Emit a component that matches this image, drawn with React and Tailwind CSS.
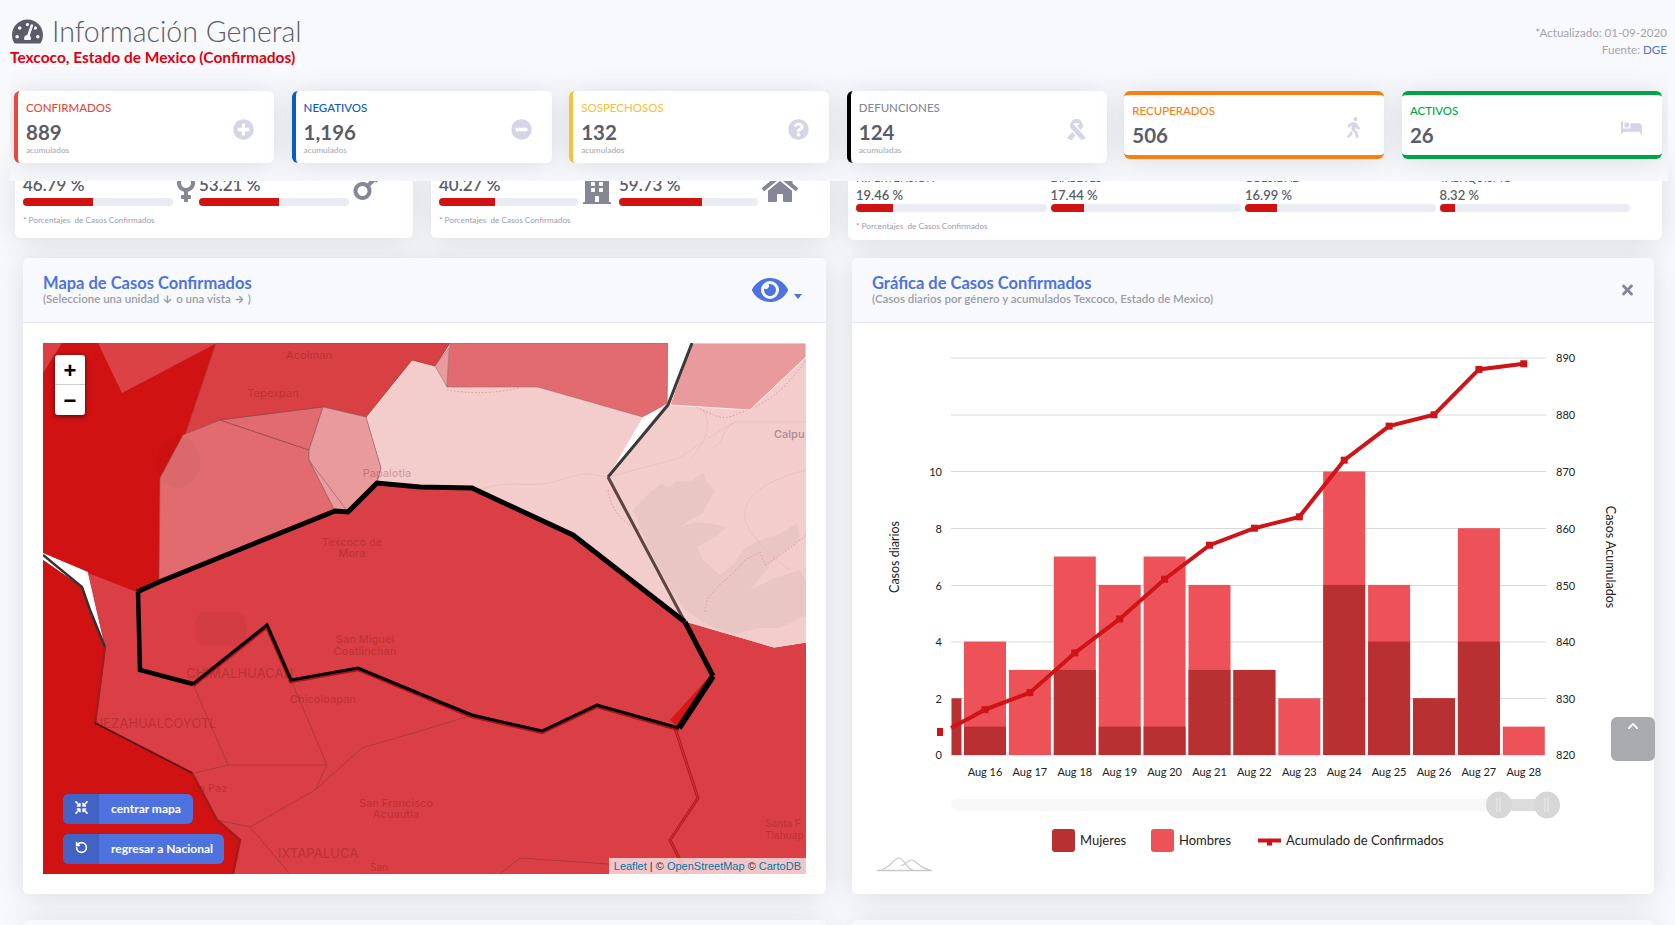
import { RotateCcw } from 'lucide-react';
import {
  FaTachometerAlt, FaPlusCircle, FaMinusCircle, FaQuestionCircle, FaRibbon, FaWalking, FaBed,
  FaVenus, FaMars, FaBuilding, FaHome, FaEye, FaTimes, FaCompressArrowsAlt, FaArrowDown, FaArrowRight, FaChevronUp,
} from 'react-icons/fa';

const kpis = [
  { label: 'CONFIRMADOS', value: '889', note: 'acumulados', Icon: FaPlusCircle, box: 'border-l-4 border-l-[#e74a3b] h-[72px]', text: 'text-[#e74a3b]' },
  { label: 'NEGATIVOS', value: '1,196', note: 'acumulados', Icon: FaMinusCircle, box: 'border-l-4 border-l-[#0a5cc2] h-[72px]', text: 'text-[#0a5cc2]' },
  { label: 'SOSPECHOSOS', value: '132', note: 'acumulados', Icon: FaQuestionCircle, box: 'border-l-4 border-l-[#f6c23e] h-[72px]', text: 'text-[#f6c23e]' },
  { label: 'DEFUNCIONES', value: '124', note: 'acumuladas', Icon: FaRibbon, box: 'border-l-4 border-l-black h-[72px]', text: 'text-[#858796]' },
  { label: 'RECUPERADOS', value: '506', Icon: FaWalking, box: 'border-y-4 border-y-[#f97f12] h-[68px]', text: 'text-[#f97f12]' },
  { label: 'ACTIVOS', value: '26', Icon: FaBed, box: 'border-y-4 border-y-[#00a446] h-[68px]', text: 'text-[#00a446]' },
];

const conditions = [
  { label: 'HIPERTENSIÓN', pct: 19.46 },
  { label: 'DIABETES', pct: 17.44 },
  { label: 'OBESIDAD', pct: 16.99 },
  { label: 'TABAQUISMO', pct: 8.32 },
];

const days = [
  { d: 'Aug 16', w: 1, t: 4, c: 828 }, { d: 'Aug 17', w: 0, t: 3, c: 831 }, { d: 'Aug 18', w: 3, t: 7, c: 838 },
  { d: 'Aug 19', w: 1, t: 6, c: 844 }, { d: 'Aug 20', w: 1, t: 7, c: 851 }, { d: 'Aug 21', w: 3, t: 6, c: 857 },
  { d: 'Aug 22', w: 3, t: 3, c: 860 }, { d: 'Aug 23', w: 0, t: 2, c: 862 }, { d: 'Aug 24', w: 6, t: 10, c: 872 },
  { d: 'Aug 25', w: 4, t: 6, c: 878 }, { d: 'Aug 26', w: 2, t: 2, c: 880 }, { d: 'Aug 27', w: 4, t: 8, c: 888 },
  { d: 'Aug 28', w: 0, t: 1, c: 889 },
];

const barY = (v) => 755 - v * 28.35;
const lineY = (c) => 755 - (c - 820) * 5.67;
const dayX = (i) => 985 + i * 44.9;

const mapLabels = [
  ['Acolman', 309, 359, 11], ['Tepexpan', 273, 397, 11], ['Papalotla', 387, 477, 11], ['Texcoco de', 352, 546, 11], ['Mora', 352, 557, 11],
  ['San Miguel', 365, 643, 11], ['Coatlinchan', 365, 655, 11], ['CHIMALHUACAN', 240, 678, 13], ['Chicoloapan', 323, 703, 11],
  ['NEZAHUALCOYOTL', 155, 728, 13], ['La Paz', 210, 792, 11], ['San Francisco', 396, 807, 11], ['Acuautla', 396, 818, 11],
  ['IXTAPALUCA', 318, 858, 13], ['San', 379, 871, 10],
];

const Bar = ({ pct }) => (
  <div className="h-2 w-full overflow-hidden rounded-full bg-[#eaecf4]">
    <div className="h-full bg-[#d01212]" style={{ width: `${pct}%` }} />
  </div>
);

const Note = ({ className }) => (
  <p className={`text-[8.2px] leading-[10px] text-[#9b9dae] ${className}`}>* Porcentajes&nbsp; de Casos Confirmados</p>
);

const PctCol = ({ pct, className }) => (
  <div className={className}>
    <p className="text-[17px] font-semibold leading-5 text-[#5a5c69]">{pct} %</p>
    <div className="mt-[3px]"><Bar pct={pct} /></div>
  </div>
);

const MapShapes = () => (
  <svg className="block h-full w-full" viewBox="43 343 763 531">
    <rect x="43" y="343" width="763" height="531" fill="#d01212" />
    <polygon points="366,417 412,360 435,366 450,343 806,343 806,643 774,648 685,622 573,535 472,488 420,487 377,483 381,468" fill="#f3cccc" />
    <path d="M633 510L650 492 662 483 668 488 677 481 690 482 703 473 707 482 715 490 708 503 703 513 690 520 680 527 695 522 712 524 727 527 715 537 697 547 703 560 712 568 720 575 735 562 745 548 760 540 778 535 797 523 800 540 783 552 770 565 760 578 750 590 775 578 800 570 806 582 806 600 806 615 780 628 760 628 735 634 710 626 685 610 665 580 650 550z" fill="#e9c6c3" />
    <g fill="none" stroke="#e6bcbc" strokeWidth="0.7">
      <path d="M480 490C510 478 530 490 560 480S590 475 608 477" />
      <path d="M608 477L680 458 705 440 735 422 806 422" />
      <path d="M700 407C715 420 705 445 690 458" />
      <path d="M735 422C720 430 725 445 712 448" />
      <path d="M806 470C775 478 750 490 745 510S775 560 790 570" />
    </g>
    <g fill="none" stroke="#e58c8e" strokeWidth="0.8" strokeDasharray="1.5 2">
      <path d="M447 390C480 395 500 392 520 388" />
      <path d="M608 490C610 510 625 525 640 530" />
      <path d="M705 612C705 590 725 585 745 560L760 552 765 565C780 555 795 545 806 535" />
      <path d="M690 405C710 412 720 422 735 415S775 405 806 360" />
    </g>
    <polygon points="43,373 62,343 43,343" fill="#db3f43" />
    <polygon points="98,343 217,343 122,393" fill="#db4246" />
    <polygon points="216,343 185,435 220,420 323,407 366,417 412,360 435,366 450,343" fill="#d94044" stroke="#8f4a4c" strokeWidth="0.6" />
    <polygon points="160,478 183,435 220,420 309,450 309,460 335,511 159,582" fill="#e16b6e" stroke="#8f5a5c" strokeWidth="0.6" />
    <ellipse cx="178" cy="462" rx="22" ry="26" fill="#000" fillOpacity="0.025" />
    <polygon points="220,420 323,407 309,450" fill="#e16b6e" stroke="#7f4a4c" strokeWidth="0.6" />
    <polygon points="323,407 366,417 381,468 377,483 348,512 335,511 309,460 309,450" fill="#e99a9c" stroke="#8f6a6c" strokeWidth="0.6" />
    <polyline points="309,460 348,512" fill="none" stroke="#8f5a5c" strokeWidth="0.6" />
    <polygon points="435,366 449,348 447,387" fill="#e99a9c" stroke="#8f6a6c" strokeWidth="0.5" />
    <polygon points="450,343 447,387 538,387 643,417 667,403 668,343" fill="#e16b6e" stroke="#9a6a6c" strokeWidth="0.6" />
    <polygon points="692,343 806,343 806,357 750,410 670,405" fill="#e99a9c" stroke="#fff" strokeWidth="0.8" />
    <polygon points="668,343 692,343 668,403" fill="#ffffff" />
    <polygon points="643,417 663,407 608,477" fill="#ffffff" />
    <polygon points="43,553 88,572 105,647 82,587 43,560" fill="#ffffff" />
    <polygon points="88,573 137,592 159,582 335,511 348,512 377,483 420,487 472,488 573,535 685,622 774,648 806,643 806,874 233,874 240,840 217,820 192,773 95,723 105,647" fill="#d93f44" />
    <rect x="195" y="612" width="52" height="34" rx="10" fill="#000" fillOpacity="0.025" />
    <polygon points="43,560 82,587 90,610 105,647 95,723 43,700" fill="#d01212" />
    <polygon points="708,678 670,720 679,728" fill="#d81616" />
    <polyline points="105,647 95,723 192,773 217,820 240,840 233,874" fill="none" stroke="#a81a1c" strokeWidth="2.5" />
    <polyline points="95,723 192,773" fill="none" stroke="#2a0a0a" strokeWidth="1" />
    <g fill="none" stroke="#8a3236" strokeWidth="0.6" opacity="0.85">
      <polyline points="193,684 228,765 327,765 291,680" />
      <polyline points="228,765 195,773" />
      <polyline points="327,765 315,790 250,827 217,820" />
      <polyline points="315,790 362,748 440,725 472,715" />
      <polyline points="250,827 290,874" />
      <polyline points="500,874 520,858 608,864" />
    </g>
    <polyline points="675,728 698,798 670,840 687,874" fill="none" stroke="#b01c1e" strokeWidth="3" />
    <polyline points="675,728 698,798 670,840 687,874" fill="none" stroke="#d33236" strokeWidth="1" />
    <polyline points="43,555 82,587 90,610 105,647" fill="none" stroke="#333333" strokeWidth="2.5" />
    <polyline points="692,343 668,405 608,477" fill="none" stroke="#3a3a3a" strokeWidth="3" />
    <polyline points="608,477 685,622" fill="none" stroke="#5e4343" strokeWidth="3" />
    {mapLabels.map(([name, x, y, size]) => (
      <text key={name} x={x} y={y} textAnchor="middle" fontSize={size} fontWeight="500" fontFamily="Inter, sans-serif" fill="#7a0f14" fillOpacity="0.28">{name}</text>
    ))}
    <text x="765" y="827" fontSize="10" fontWeight="500" fontFamily="Inter, sans-serif" fill="#7a0f14" fillOpacity="0.28">Santa F</text>
    <text x="765" y="839" fontSize="10" fontWeight="500" fontFamily="Inter, sans-serif" fill="#7a0f14" fillOpacity="0.28">Tlahuap</text>
    <text x="774" y="438" fontSize="11" fontWeight="500" fontFamily="Inter, sans-serif" fill="#a58b9a">Calpu</text>
    <polyline points="679,729 597,706 542,732 472,716 440,703 358,669 291,681 267,626 193,685" fill="none" stroke="#ab1418" strokeWidth="4.5" />
    <polyline points="137,592 159,582 335,511 348,512 377,483 420,487 472,488 573,535 685,622" fill="none" stroke="#000" strokeWidth="5" />
    <polyline points="685,622 713,676" fill="none" stroke="#000" strokeWidth="5" />
    <polyline points="713,676 679,728" fill="none" stroke="#000" strokeWidth="6" />
    <polyline points="679,728 597,705 542,731 472,715 440,702 358,668 291,680 267,625 193,684" fill="none" stroke="#000" strokeWidth="3" />
    <polyline points="193,684 140,670 138,592" fill="none" stroke="#000" strokeWidth="4.5" />
  </svg>
);

const Chart = () => {
  const grid = [
    [755, '0', '820'], [698.5, '2', '830'], [642, '4', '840'], [585.5, '6', '850'], [528.5, '8', '860'], [471.5, '10', '870'], [415, '', '880'], [358, '', '890'],
  ];
  const points = [`951,728`, ...days.map((p, i) => `${dayX(i)},${lineY(p.c)}`)].join(' ');
  return (
    <svg className="block h-[498px] w-full" viewBox="852 323 802 498" fontFamily="Lato, sans-serif">
      {grid.map(([y, left, right]) => (
        <g key={y}>
          <line x1="951" x2="1546" y1={y} y2={y} stroke="#d9d9d9" strokeWidth="1" />
          {left && <text x="942" y={y + 4} textAnchor="end" fontSize="11" fill="#222">{left}</text>}
          <text x="1556" y={y + 4} fontSize="11" fill="#222">{right}</text>
        </g>
      ))}
      <text transform="translate(899 557) rotate(-90)" textAnchor="middle" fontSize="12.5" fill="#222">Casos diarios</text>
      <text transform="translate(1606 557) rotate(90)" textAnchor="middle" fontSize="12.5" fill="#222">Casos Acumulados</text>
      <rect x="951.5" y={barY(2)} width="10" height={755 - barY(2)} fill="#b83032" />
      {days.map((p, i) => (
        <g key={p.d}>
          <rect x={dayX(i) - 21} y={barY(p.t)} width="42" height={755 - barY(p.t)} fill="#ec5257" />
          {p.w > 0 && <rect x={dayX(i) - 21} y={barY(p.w)} width="42" height={755 - barY(p.w)} fill="#b83032" />}
          <text x={dayX(i)} y="776" textAnchor="middle" fontSize="11" fill="#222">{p.d}</text>
        </g>
      ))}
      <polyline points={points} fill="none" stroke="#d01317" strokeWidth="4" />
      <rect x="937" y="728" width="6" height="8" fill="#d01317" />
      {days.map((p, i) => (
        <rect key={p.d} x={dayX(i) - 3.5} y={lineY(p.c) - 3.5} width="7" height="7" fill="#d01317" />
      ))}
      <rect x="951" y="799" width="595" height="12" rx="6" fill="#f8f8f8" />
      <rect x="1510" y="799" width="26" height="12" fill="#dcdcdc" />
      {[1499, 1547].map((x) => (
        <g key={x}>
          <ellipse cx={x} cy="805" rx="13" ry="13.5" fill="#d7d7d7" />
          <path d={`M${x - 2} 798v14M${x + 1} 798v14`} stroke="#ececec" strokeWidth="1" />
        </g>
      ))}
    </svg>
  );
};

const App = () => (
  <div className="relative h-[925px] overflow-hidden bg-[#f8f9fc] font-['Lato',sans-serif]">
    <header className="relative z-10 ml-[10px] mr-[7px] h-[181px] overflow-hidden bg-[#f8f9fc]">
      <div className="flex h-[91px] items-start justify-between pr-px pt-[15px]">
        <div>
          <div className="flex items-center gap-[9px] pl-[2px] text-[#5a5c69]">
            <FaTachometerAlt className="h-[31px] w-[31px]" />
            <h1 className="text-[28.5px] font-light leading-[33px]">Información General</h1>
          </div>
          <p className="text-[15.5px] font-bold leading-[18px] text-[#df0012]">Texcoco, Estado de Mexico (Confirmados)</p>
        </div>
        <div className="pt-[9px] text-right text-[11.6px] leading-[17px] text-[#a3a4b0]">
          <p>*Actualizado: 01-09-2020</p>
          <p>Fuente: <span className="text-[#4e73df]">DGE</span></p>
        </div>
      </div>
      <div className="grid grid-cols-6 items-start gap-[17.5px] pl-[4px] pr-[6px]">
        {kpis.map(({ label, value, note, Icon, box, text }) => (
          <div key={label} className={`flex items-center justify-between rounded-md bg-white pl-2 pr-5 shadow-[0_2px_28px_rgba(58,59,69,0.15)] ${box}`}>
            <div className={note ? 'pt-[2px]' : ''}>
              <p className={`text-[11.5px] font-medium leading-[14px] ${text}`}>{label}</p>
              <p className="mt-[5px] text-[20.5px] font-bold leading-6 text-[#5a5c69]">{value}</p>
              {note && <p className="mt-px text-[8.3px] leading-[10px] text-[#a3a4b0]">{note}</p>}
            </div>
            <Icon className="mt-[5px] h-[21px] w-auto text-[#d4d5e6]" />
          </div>
        ))}
      </div>
    </header>

    <section className="-mt-[21px] flex items-start gap-[18px] pl-[15px]">
      <div className="flex h-[78px] w-[398px] rounded-md bg-white pl-2 pt-[15px] shadow-[0_2px_28px_rgba(58,59,69,0.15)]">
        <div>
          <div className="flex items-start">
            <PctCol pct="46.79" className="w-[150px]" />
            <FaVenus className="mx-1 -mt-[3px] h-8 w-[18px] text-[#858796]" />
            <PctCol pct="53.21" className="w-[150px]" />
            <FaMars className="ml-1 -mt-[3px] h-8 w-[25px] text-[#858796]" />
          </div>
          <Note className="mt-[9px]" />
        </div>
      </div>
      <div className="flex h-[78px] w-[399px] rounded-md bg-white pl-2 pt-[15px] shadow-[0_2px_28px_rgba(58,59,69,0.15)]">
        <div>
          <div className="flex items-start">
            <PctCol pct="40.27" className="w-[139px]" />
            <FaBuilding className="ml-[5px] mr-2 -mt-[3px] h-8 w-[28px] text-[#858796]" />
            <PctCol pct="59.73" className="w-[139px]" />
            <FaHome className="ml-1 -mt-[3px] h-8 w-[36px] text-[#858796]" />
          </div>
          <Note className="mt-[9px]" />
        </div>
      </div>
      <div className="h-[80px] w-[814px] rounded-md bg-white pl-2 pt-3 shadow-[0_2px_28px_rgba(58,59,69,0.15)]">
        <div className="flex gap-1">
          {conditions.map((c) => (
            <div key={c.label} className="w-[190.5px]">
              <p className="text-[11px] leading-3 text-[#5a5c69]">{c.label}</p>
              <p className="mt-1 text-[13px] font-semibold leading-[14px] text-[#5a5c69]">{c.pct} %</p>
              <div className="mt-0.5"><Bar pct={c.pct} /></div>
            </div>
          ))}
        </div>
        <Note className="mt-[9px]" />
      </div>
    </section>

    <section className="ml-[23px] mr-[21px] mt-[18px] flex items-start gap-[26px]">
      <article className="h-[636px] w-[803px] overflow-hidden rounded-md bg-white shadow-[0_2px_28px_rgba(58,59,69,0.15)]">
        <div className="flex h-[65px] items-center justify-between border-b border-[#e3e6f0] bg-[#f8f9fc] pb-px pl-5 pr-6">
          <div>
            <h2 className="text-[16.5px] font-bold leading-5 text-[#4e73df]">Mapa de Casos Confirmados</h2>
            <p className="-mt-px flex items-center gap-1 text-[11.5px] font-semibold leading-[14px] text-[#9a9ca9]">
              (Seleccione una unidad <FaArrowDown className="h-[9px] w-[9px]" /> o una vista <FaArrowRight className="h-[9px] w-[9px]" />)
            </p>
          </div>
          <div className="flex items-end gap-[6px] text-[#4e73df]">
            <FaEye className="h-[36px] w-[36px]" />
            <span className="mb-[9px] h-0 w-0 border-x-[4px] border-t-[5px] border-x-transparent border-t-[#4e73df]" />
          </div>
        </div>
        <div className="p-5">
          <div className="relative h-[531px] overflow-hidden">
            <MapShapes />
            <div className="absolute left-3 top-3 w-[30px] overflow-hidden rounded-[3px] bg-white text-center font-['Liberation_Sans',sans-serif] text-[22px] font-bold leading-[31px] text-black shadow-[0_1px_5px_rgba(0,0,0,0.65)]">
              <div className="h-[30px] border-b border-[#ccc]">+</div>
              <div className="h-[30px]">−</div>
            </div>
            <div className="absolute bottom-[10px] left-5 flex flex-col items-start gap-[10px] text-[12px] font-bold text-white">
              <button className="flex h-[30px] items-stretch overflow-hidden rounded-md bg-[#4e73df]">
                <span className="flex w-9 justify-center bg-[#4263c4] pt-[7px]"><FaCompressArrowsAlt className="h-[13px] w-[13px]" /></span>
                <span className="flex items-center pl-3 pr-3">centrar mapa</span>
              </button>
              <button className="flex h-[30px] items-stretch overflow-hidden rounded-md bg-[#4e73df]">
                <span className="flex w-9 justify-center bg-[#4263c4] pt-[7px]"><RotateCcw className="h-[13px] w-[13px]" strokeWidth={3} /></span>
                <span className="flex items-center pl-3 pr-[11px]">regresar a Nacional</span>
              </button>
            </div>
            <div className="absolute bottom-0 right-0 flex h-4 items-center bg-white/70 px-[5px] font-['Liberation_Sans',sans-serif] text-[11px] text-[#333]">
              <span className="text-[#0078a8]">Leaflet</span>&nbsp;| ©&nbsp;<span className="text-[#0078a8]">OpenStreetMap</span>&nbsp;©&nbsp;<span className="text-[#0078a8]">CartoDB</span>
            </div>
          </div>
        </div>
      </article>

      <article className="h-[636px] w-[802px] overflow-hidden rounded-md bg-white shadow-[0_2px_28px_rgba(58,59,69,0.15)]">
        <div className="flex h-[65px] items-center justify-between border-b border-[#e3e6f0] bg-[#f8f9fc] pb-px pl-5 pr-5">
          <div>
            <h2 className="text-[16.5px] font-bold leading-5 text-[#4e73df]">Gráfica de Casos Confirmados</h2>
            <p className="-mt-px text-[11.5px] font-semibold leading-[14px] text-[#9a9ca9]">(Casos diarios por género y acumulados Texcoco, Estado de Mexico)</p>
          </div>
          <FaTimes className="h-4 w-[13px] text-[#858796]" />
        </div>
        <Chart />
        <div className="ml-[200px] mt-2 flex h-[23px] items-center text-[13px] text-[#222]">
          <div className="flex w-[99px] items-center gap-[5px]"><span className="h-[23px] w-[23px] rounded-[3px] bg-[#b83032]" />Mujeres</div>
          <div className="flex w-[107px] items-center gap-[5px]"><span className="h-[23px] w-[23px] rounded-[3px] bg-[#ec5257]" />Hombres</div>
          <div className="flex items-center gap-[5px]">
            <svg width="23" height="10" viewBox="0 0 23 10"><path d="M0 2.5h23v4H0zM9 2.5h5v7H9z" fill="#d01317" /></svg>
            Acumulado de Confirmados
          </div>
        </div>
        <svg className="ml-[25px] mt-[5px]" width="55" height="15" viewBox="0 0 55 15" fill="none" stroke="#c8c8c8">
          <path d="M0 13.5h55" strokeWidth="1.6" />
          <path d="M4 13C12 12 17 1 22 1s8 12 14 12" strokeWidth="1.2" />
          <path d="M24 9C29 7 31 3 35 3s7 8 18 10" strokeWidth="1.2" />
        </svg>
      </article>
    </section>

    <section className="ml-[23px] mr-[21px] mt-[26px] flex gap-[26px]">
      <div className="h-[80px] w-[803px] rounded-md bg-[#f8f9fc] shadow-[0_2px_28px_rgba(58,59,69,0.15)]" />
      <div className="h-[80px] w-[802px] rounded-md bg-[#f8f9fc] shadow-[0_2px_28px_rgba(58,59,69,0.15)]" />
    </section>

    <button className="absolute left-[1611px] top-[717px] z-20 flex h-[44px] w-[44px] justify-center rounded-md bg-[#a9aaae] pt-[3px] text-white">
      <FaChevronUp className="h-3 w-3" />
    </button>
  </div>
);

export default App;
